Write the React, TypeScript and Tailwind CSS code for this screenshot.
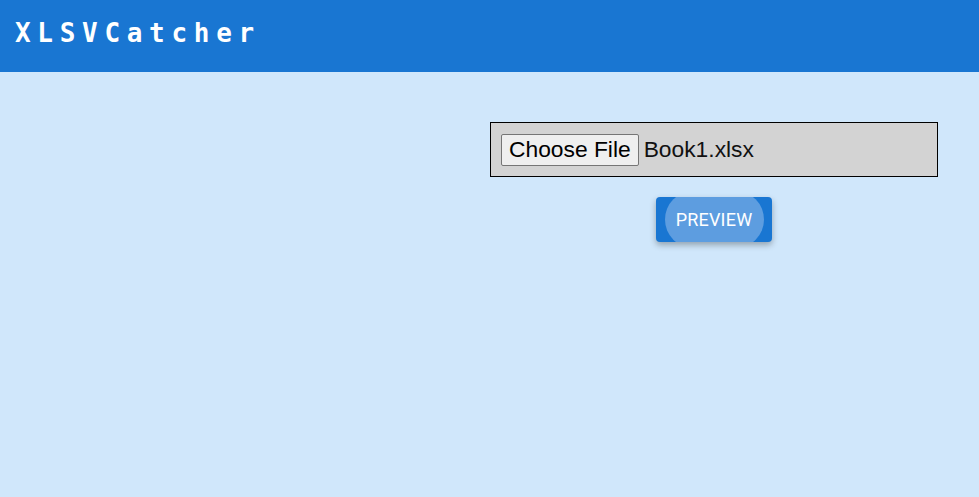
export default function App() {
  return (
    <div className="min-h-[497px] bg-[#d0e7fb]">
      {/* Top bar */}
      <header className="flex h-[72px] items-center bg-[#1976d2] px-[15px] pb-[6px]">
        <h1
          className="text-[26px] font-bold tracking-[6.7px] text-white"
          style={{ fontFamily: "'DejaVu Sans Mono', monospace" }}
        >
          XLSVCatcher
        </h1>
      </header>

      <main className="flex pt-[50px]">
        <div className="w-[490px]" />
        <div className="flex w-[448px] flex-col items-center gap-[20px]">
          {/* File picker */}
          <div className="flex h-[55px] w-full items-center gap-[5px] border border-black bg-[#d3d3d3] px-[10px] font-['Liberation_Sans',Arial,sans-serif] text-[22.8px] text-[#111]">
            <span className="flex h-[32px] items-center rounded-[2px] border border-[#767676] bg-[#efefef] px-[7px] leading-none text-black">
              Choose File
            </span>
            <span className="leading-none">Book1.xlsx</span>
          </div>

          {/* Preview button */}
          <button className="relative flex h-[45px] w-[116px] items-center justify-center overflow-hidden rounded-[4px] bg-[#1976d2] font-['Roboto',sans-serif] text-[18px] font-normal tracking-[0.2px] text-white shadow-[0_3px_6px_rgba(0,0,0,0.3)]">
            <span className="absolute left-[9px] top-[-6px] h-[57px] w-[99px] rounded-full bg-[#5d9de0]" />
            <span className="relative">PREVIEW</span>
          </button>
        </div>
      </main>
    </div>
  );
}
